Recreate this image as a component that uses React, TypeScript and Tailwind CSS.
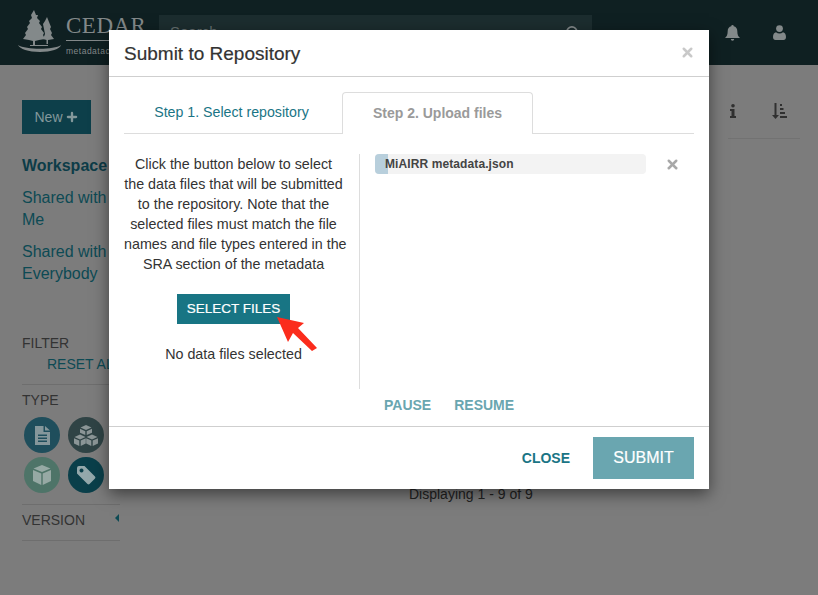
import { Plus, Search, X } from "lucide-react";

const font = "font-['Liberation_Sans',Arial,sans-serif]";

function TreeLogo() {
  return (
    <svg width="44" height="42" viewBox="0 0 44 42" className="mt-[-4px] shrink-0">
      <g fill="#83898a">
        <path d="M16 0 L18 5 L20 5 L19 8 L22 11 L21 13 L24 17 L23 19 L26 23 L25 25 L27 29 L21 30 L17 31 L17 35 L15 35 L15 31 L11 30 L5 29 L8 25 L7 23 L10 19 L9 17 L12 13 L11 11 L14 8 L13 5 Z" />
        <path d="M29 7 L31 12 L33 17 L32 19 L34 23 L33 25 L36 29 L30 30 L30 34 L28.500 34 L28.500 30 L25 29 L27 24 L26 19 L25 14 L27 11 Z" />
        <path d="M12 35 H30 V36 H12 Z" />
        <path d="M0 35 C8 40 36 40 43 35 C42 39 33 42 22 42 C10 42 2 39 0 35 Z" />
      </g>
    </svg>
  );
}

function Background() {
  return (
    <div className="h-[595px] w-[818px] overflow-hidden bg-[#7c7c7c]">
      <header className="flex h-[65px] items-center bg-[#0f2022] pl-[18px]">
        <TreeLogo />
        <div className="ml-[4px] mt-[4px] w-[86px] shrink-0 overflow-hidden">
          <div className="border-b border-[#83898a] pb-[1px] font-['Liberation_Serif',serif] text-[23px] leading-[26px] tracking-[0.5px] text-[#83898a]">CEDAR</div>
          <div className="mt-[4px] whitespace-nowrap text-[8.500px] leading-[12px] tracking-[0.5px] text-[#83898a]">metadatacenter</div>
        </div>
        <div className="ml-[7px] mt-[15px] flex h-[35px] w-[433px] items-center justify-between self-start bg-[#1c2d2f] pl-[11px] pr-[12px]">
          <span className="text-[15px] text-[#656f70]">Search</span>
          <Search size={15} strokeWidth={2.5} className="text-[#83898a]" />
        </div>
        <div className="ml-[133px] flex items-center gap-[33px] text-[#83898a]">
          <svg width="15" height="16" viewBox="0 0 15 16" fill="currentColor">
            <path d="M7.500 0a1.200 1.200 0 0 1 1.200 1.300C11 1.800 12.300 3.600 12.300 6c0 4 1 5.500 2.700 7H0c1.700-1.500 2.700-3 2.700-7 0-2.400 1.300-4.200 3.600-4.700A1.200 1.200 0 0 1 7.500 0zM5.800 14h3.400a1.700 1.700 0 0 1-3.400 0z" />
          </svg>
          <svg width="13" height="15" viewBox="0 0 13 15" fill="currentColor">
            <circle cx="6.500" cy="3.600" r="3.400" />
            <path d="M0 12c0-3 1.500-4.600 3-4.800 1 .8 2.200 1.200 3.500 1.200s2.500-.4 3.500-1.200c1.500.2 3 1.800 3 4.800 0 2-1 3-2.500 3h-8C1 15 0 14 0 12z" />
          </svg>
        </div>
      </header>
      <div className="flex">
        <aside className="ml-[22px] w-[98px] shrink-0 pt-[35px]">
          <div className="flex h-[34px] w-[69px] items-center justify-center gap-[2px] bg-[#0d3f4a] text-[14px] text-[#83989b]">
            New
            <Plus size={14} strokeWidth={4} />
          </div>
          <div className="mt-[21px] text-[16px] font-bold leading-[22px] text-[#0d3c48]">Workspace</div>
          <div className="mt-[10px] text-[16px] leading-[22px] text-[#0d4a54]">Shared with<br />Me</div>
          <div className="mt-[10px] text-[16px] leading-[22px] text-[#0d4a54]">Shared with<br />Everybody</div>
          <div className="mt-[48px] text-[14px] leading-[20px] text-[#333]">FILTER</div>
          <div className="mt-[1px] whitespace-nowrap pl-[25px] text-[14px] leading-[20px] text-[#0d4a54]">RESET ALL</div>
          <div className="mt-[10px] border-t border-[#6e6e6e] pt-[5px] text-[14px] leading-[20px] text-[#333]">TYPE</div>
          <div className="mt-[7px] grid grid-cols-[36px_36px] gap-x-[8px] gap-y-[4px] pl-[2px]">
            <div className="flex h-9 w-9 items-center justify-center rounded-full bg-[#1f4e5c]">
              <svg width="15" height="19" viewBox="0 0 15 19" fill="#85979b" fillRule="evenodd">
                <path d="M0 0h8.500v6H15v13H0zM3 8.500v1.500h9V8.500zM3 11.500V13h9v-1.500zM3 14.500V16h9v-1.500z" />
                <path d="M10 0l5 4.500h-5z" />
              </svg>
            </div>
            <div className="flex h-9 w-9 items-center justify-center rounded-full bg-[#2f4345]">
              <svg width="24" height="21" viewBox="0 0 24 21" fill="#8b9596">
                <path d="M12 0l5.500 2.500L12 5 6.500 2.500zM6 3.800l5.300 2.400V10L6 7.800zM18 3.800v4L12.700 10V6.200z" />
                <path d="M6 9.500l5.500 2.500L6 14.500.500 12zM0 13.200l5.300 2.400V21L0 18.500zM11.800 13.200v5.300L6.700 21v-5.400z" />
                <path d="M18 9.500l5.500 2.500-5.500 2.500-5.500-2.500zM12.200 13.200l5.100 2.400V21l-5.100-2.500zM24 13.200v5.300L18.700 21v-5.400z" />
              </svg>
            </div>
            <div className="flex h-9 w-9 items-center justify-center rounded-full bg-[#4e7468]">
              <svg width="18" height="20" viewBox="0 0 18 20" fill="#96a9a4">
                <path d="M9 0l8.500 3.500L9 7 .500 3.500zM0 5l8.300 3.400V20L0 16zM18 5v11l-8.300 4V8.400z" />
              </svg>
            </div>
            <div className="flex h-9 w-9 items-center justify-center rounded-full bg-[#0a3f4a]">
              <svg width="20" height="20" viewBox="0 0 20 20" fill="#93a8ab" fillRule="evenodd">
                <path d="M1 3a2 2 0 0 1 2-2h5.500L19 11.500a1.500 1.500 0 0 1 0 2L13.500 19a1.500 1.500 0 0 1-2 0L1 8.500zM5.500 3.500a2 2 0 1 0 .01 0z" />
              </svg>
            </div>
          </div>
          <div className="mt-[11px] flex items-center justify-between border-y border-[#6e6e6e] pb-[7px] pr-[1px] pt-[3px] text-[14px] leading-[25px] text-[#333]">
            VERSION
            <span className="mb-[5px] h-0 w-0 border-y-[4px] border-r-[4px] border-y-transparent border-r-[#0d4a54]" />
          </div>
        </aside>
        <main className="flex-1">
          <div className="ml-auto mr-[18px] mt-[35px] flex h-[39px] w-[72px] items-start justify-end gap-[36px] border-b border-[#727272] pr-[13px] pt-[3px]">
            <svg width="6" height="14" viewBox="0 0 6 14" fill="#303030" className="mt-[1px]">
              <circle cx="3" cy="1.800" r="1.800" />
              <path d="M0 5h4.500v7H6v2H0v-2h1.500V7H0z" />
            </svg>
            <svg width="15" height="16" viewBox="0 0 15 16" fill="#303030">
              <path d="M2.500 0h2v12H7l-3.500 4L0 12h2.500zM8 1h2v2H8zM8 5h3.500v2H8zM8 9h5v2H8zM8 13h7v2H8z" />
            </svg>
          </div>
        </main>
      </div>
      <div className="absolute left-[409px] top-[484px] text-[14px] text-[#222]">Displaying 1 - 9 of 9</div>
    </div>
  );
}

function Modal() {
  return (
    <div className="absolute left-[109px] top-[30px] h-[459px] w-[600px] bg-white shadow-[0_5px_15px_rgba(0,0,0,0.5)]">
      <div className="flex h-[47px] items-center justify-between border-b border-[#cfcfcf] pl-[15px] pr-[14px]">
        <h4 className="mt-[1px] text-[19px] leading-[20px] text-[#333] [-webkit-text-stroke:0.2px_#333]">Submit to Repository</h4>
        <X size={15} strokeWidth={4} className="mb-[2px] text-[#c9c9c9]" />
      </div>
      <div className="h-[349px] px-[15px] pt-[15px]">
        <div className="flex h-[42px] border-b border-[#dddddd] text-[14px]">
          <div className="flex w-[218px] items-center justify-center pr-[3px] pt-[1px] text-[14.200px] text-[#1a7585]">Step 1. Select repository</div>
          <div className="flex h-[42px] w-[191px] items-center justify-center rounded-t border border-b-0 border-[#dddddd] bg-white pb-[1px] font-bold text-[#9a9a9a]">Step 2. Upload files</div>
        </div>
        <div className="mt-[20px] flex h-[235px]">
          <div className="w-[236px] shrink-0 border-r border-[#dddddd] pr-[16px] text-center text-[14.300px] leading-[20px] text-[#333]">
            <p className="whitespace-nowrap">
              Click the button below to select<br />
              the data files that will be submitted<br />
              to the repository. Note that the<br />
              selected files must match the file<br />
              names and file types entered in the<br />
              SRA section of the metadata
            </p>
            <div className="relative mx-auto mt-[20px] flex h-[30px] w-[113px] items-center justify-center bg-[#187584] text-[13.500px] text-white [-webkit-text-stroke:0.2px_white]">
              SELECT FILES
              <svg width="42" height="36" viewBox="0 0 42 36" className="absolute left-[100px] top-[23px]">
                <path d="M0 0 L27 6 L21 11 L40 31 L35 34 L16 16 L11 25 Z" fill="#fb2c1c" />
              </svg>
            </div>
            <p className="mt-[20px]">No data files selected</p>
          </div>
          <div className="flex items-start pl-[15px]">
            <div className="relative h-[20px] w-[271px] overflow-hidden rounded bg-[#f3f3f3]">
              <div className="h-full w-[13px] bg-[#b8cfdc]" />
              <span className="absolute left-[10px] top-0 text-[12px] font-bold leading-[20px] tracking-[0.1px] text-[#444]">MiAIRR metadata.json</span>
            </div>
            <X size={15} strokeWidth={4} className="ml-[19px] mt-[3px] text-[#a8a8a8]" />
          </div>
        </div>
        <div className="mt-[6px] flex gap-[23px] pl-[260px] text-[14px] font-bold leading-[20px] text-[#6aa6b0]">
          <span>PAUSE</span>
          <span>RESUME</span>
        </div>
      </div>
      <div className="flex items-center justify-end gap-[23px] border-t border-[#cfcfcf] pr-[15px] pt-[10px]">
        <span className="text-[14px] font-bold text-[#1a7585]">CLOSE</span>
        <div className="flex h-[42px] w-[101px] items-center justify-center bg-[#6aa6b0] text-[16px] text-white [-webkit-text-stroke:0.2px_white]">SUBMIT</div>
      </div>
    </div>
  );
}

export default function App() {
  return (
    <div className={`relative h-[595px] w-[818px] overflow-hidden ${font}`}>
      <Background />
      <Modal />
    </div>
  );
}
